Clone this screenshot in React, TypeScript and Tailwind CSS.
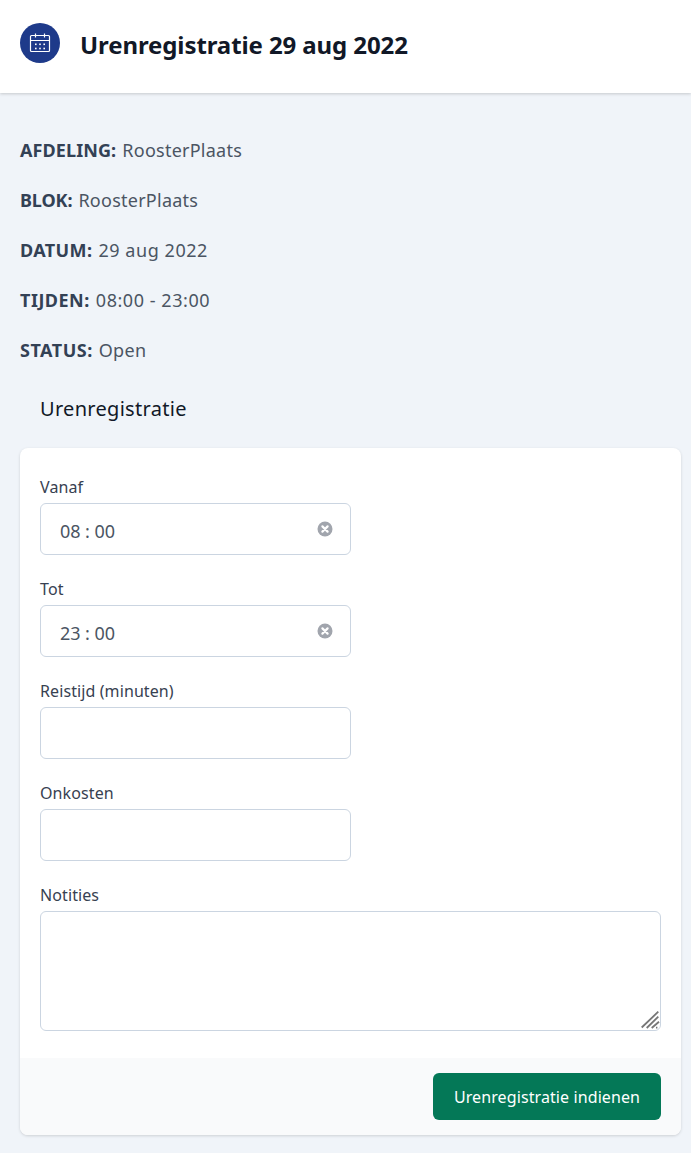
import React from 'react';

const details = [
  { label: 'AFDELING:', value: 'RoosterPlaats', labelClass: 'tracking-[0.1px]', valueClass: 'tracking-[0.25px]' },
  { label: 'BLOK:', value: 'RoosterPlaats', labelClass: 'tracking-[-0.1px]', valueClass: 'tracking-[0.25px]' },
  { label: 'DATUM:', value: '29 aug 2022', labelClass: 'tracking-[0.4px]', valueClass: 'tracking-[0.55px]' },
  { label: 'TIJDEN:', value: '08:00 - 23:00', labelClass: 'tracking-[0.5px]', valueClass: 'tracking-[0.55px]' },
  { label: 'STATUS:', value: 'Open', labelClass: 'tracking-[0.5px]', valueClass: 'tracking-[0.3px]' },
];

function CalendarIcon() {
  return (
    <svg viewBox="0 0 40 40" className="h-10 w-10 text-white" fill="none" stroke="currentColor" aria-hidden="true">
      <rect x="10.5" y="12.5" width="19" height="16" rx="1" strokeWidth="1.2" />
      <path d="M10.5 17.5h19M15.5 10.5v4M24.5 10.5v4" strokeWidth="1.2" />
      <g fill="currentColor" stroke="none">
        <rect x="15" y="20.5" width="1.6" height="1.6" />
        <rect x="19.2" y="20.5" width="1.6" height="1.6" />
        <rect x="23.4" y="20.5" width="1.6" height="1.6" />
        <rect x="15" y="24.7" width="1.6" height="1.6" />
        <rect x="19.2" y="24.7" width="1.6" height="1.6" />
        <rect x="23.4" y="24.7" width="1.6" height="1.6" />
      </g>
    </svg>
  );
}

function ClearIcon() {
  return (
    <svg viewBox="0 0 16 16" className="h-4 w-4 text-[#a1a5ad]" fill="currentColor" aria-hidden="true">
      <circle cx="8" cy="8" r="7.5" />
      <path d="M5.4 5.4l5.2 5.2M10.6 5.4l-5.2 5.2" stroke="#fff" strokeWidth="2.2" strokeLinecap="round" fill="none" />
    </svg>
  );
}

function TimeField({ label, hours, minutes }: { label: string; hours: string; minutes: string }) {
  return (
    <div className="mb-[22px]">
      <label className="block h-[24px] text-base leading-6 tracking-[0.1px] text-[#374151]">{label}</label>
      <div className="mt-[4px] flex h-[52px] w-[311px] items-center justify-between rounded-md border border-[#cbd5e1] bg-white pl-[19px] pr-[17px]">
        <span className="flex items-center pt-[3px] text-lg text-[#4b5563]">
          <span>{hours}</span>
          <span className="mx-[4.5px]">:</span>
          <span>{minutes}</span>
        </span>
        <ClearIcon />
      </div>
    </div>
  );
}

function TextField({ label }: { label: string }) {
  return (
    <div className="mb-[22px]">
      <label className="block h-[24px] text-base leading-6 tracking-[0.1px] text-[#374151]">{label}</label>
      <input
        type="text"
        aria-label={label}
        className="mt-[4px] block h-[52px] w-[311px] rounded-md border border-[#cbd5e1] bg-white px-4 outline-none"
      />
    </div>
  );
}

export default function App() {
  return (
    <div className="min-h-[1153px] bg-[#f0f4f9] font-['Noto_Sans','Open_Sans',sans-serif]">
      {/* Header */}
      <header className="flex h-[93px] items-start bg-white pl-5 pt-[23px] shadow-[0_1px_3px_rgba(0,0,0,0.18)]">
        <div className="h-10 w-10 rounded-full bg-[#1e3a8a]">
          <CalendarIcon />
        </div>
        <h1 className="ml-5 mt-[6px] text-2xl leading-8 font-bold tracking-[-0.1px] text-[#111827]">
          Urenregistratie 29 aug 2022
        </h1>
      </header>

      <main className="pt-[43px]">
        <dl className="px-5">
          {details.map((row) => (
            <div key={row.label} className="mb-[22px] flex h-[28px] items-center text-lg leading-7 text-[#4b5563]">
              <dt className={`mr-[6px] font-bold text-[#334155] ${row.labelClass}`}>{row.label}</dt>
              <dd className={row.valueClass}>{row.value}</dd>
            </div>
          ))}
        </dl>

        <h2 className="mt-[31px] pl-10 text-xl leading-7 tracking-[0.3px] text-[#111827]">Urenregistratie</h2>

        {/* Form card */}
        <section className="ml-5 mr-[10px] mt-[25px] overflow-hidden rounded-lg bg-white shadow-[0_1px_3px_rgba(0,0,0,0.15)]">
          <div className="px-5 py-[27px]">
            <TimeField label="Vanaf" hours="08" minutes="00" />
            <TimeField label="Tot" hours="23" minutes="00" />
            <TextField label="Reistijd (minuten)" />
            <TextField label="Onkosten" />
            <label className="block h-[24px] text-base leading-6 tracking-[0.1px] text-[#374151]">Notities</label>
            <div className="relative mt-[4px]">
              <textarea
                aria-label="Notities"
                className="block h-[120px] w-full resize-none rounded-md border border-[#cbd5e1] bg-white px-4 py-2 outline-none"
              />
              {/* resize grip */}
              <svg viewBox="0 0 20 20" className="pointer-events-none absolute bottom-px right-px h-5 w-5 text-[#777]" fill="none" stroke="currentColor" strokeWidth="1.8" aria-hidden="true">
                <path d="M1.7 17.5L18.3 1.7M6.7 18L18.3 6.7M11.7 18L19 11.7M16 17.6h1.4" />
              </svg>
            </div>
          </div>
          <div className="flex justify-end bg-[#f9fafb] px-5 py-[15px]">
            <button className="h-[47px] w-[228px] rounded-md bg-[#047857] text-base tracking-[0.1px] text-white">
              Urenregistratie indienen
            </button>
          </div>
        </section>
      </main>
    </div>
  );
}
